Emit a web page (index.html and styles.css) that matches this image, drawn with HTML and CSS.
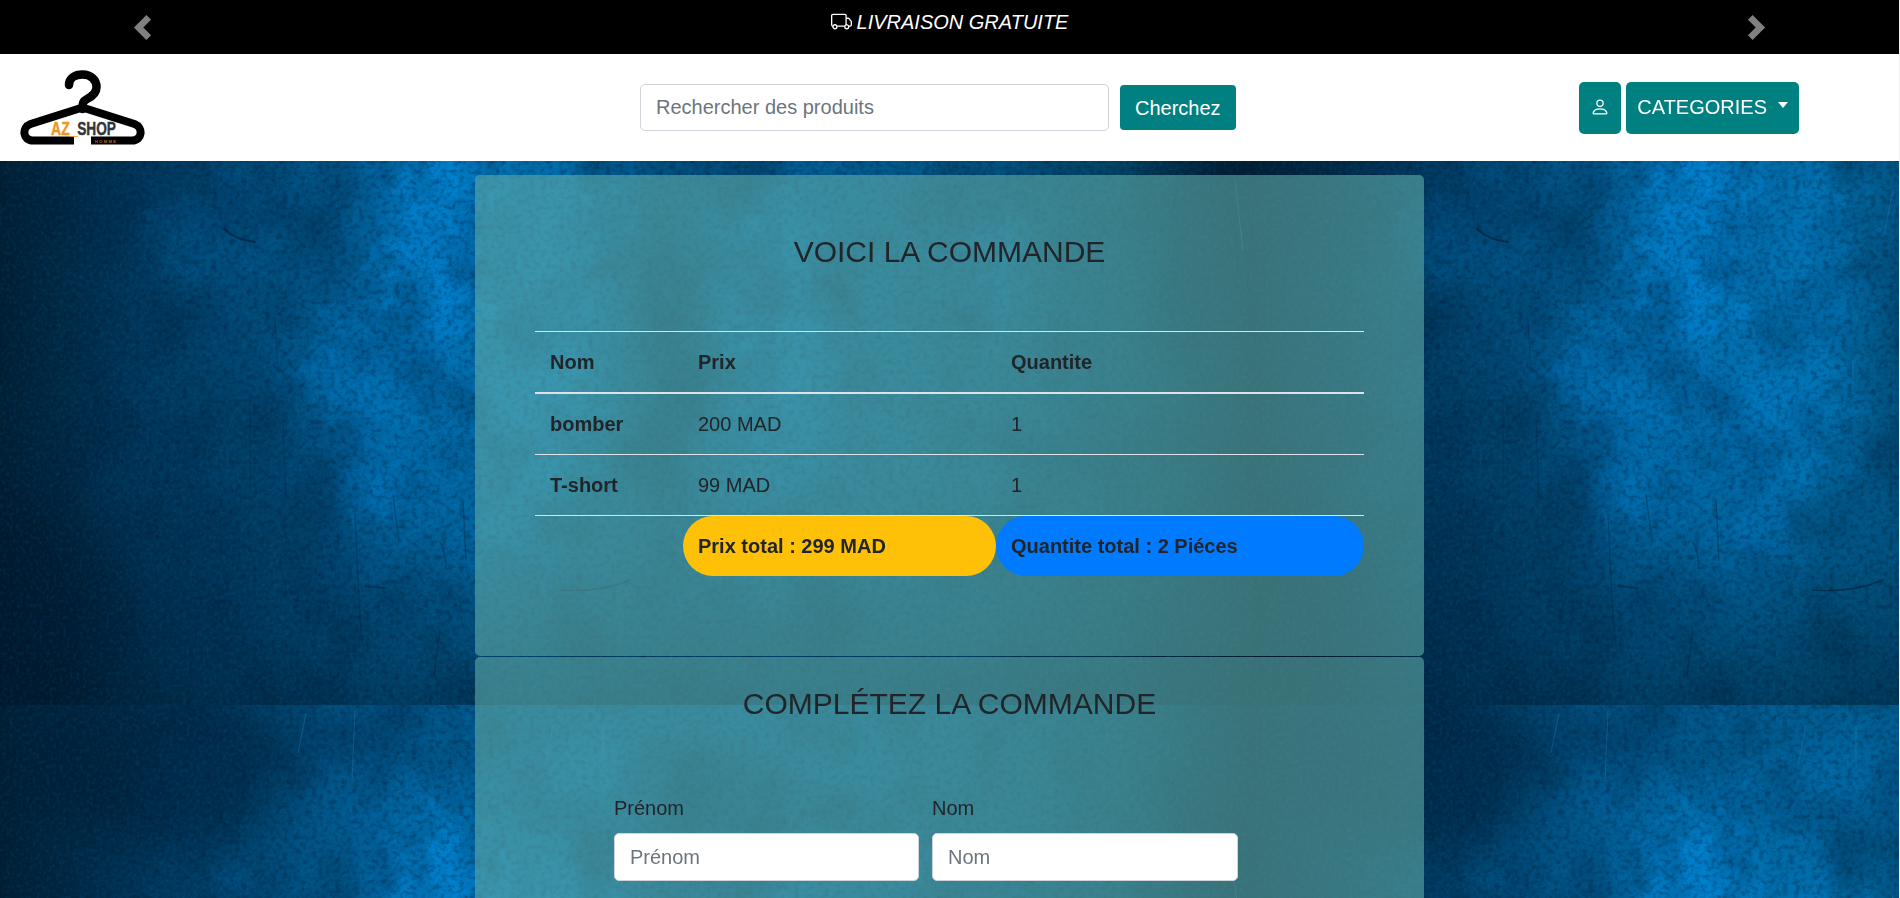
FILE: index.html
```html
<!DOCTYPE html>
<html lang="fr">
<head>
<meta charset="utf-8">
<title>AZ_SHOP</title>
<link rel="stylesheet" href="styles.css">
</head>
<body>
<svg class="backdrop" width="1899" height="898" viewBox="0 0 1899 898" color-interpolation-filters="sRGB" aria-hidden="true">
  <defs>
    <linearGradient id="base">
      <stop offset="0" stop-color="#001f33"/>
      <stop offset=".06" stop-color="#002c48"/>
      <stop offset=".14" stop-color="#004068"/>
      <stop offset=".23" stop-color="#00507f"/>
      <stop offset=".3" stop-color="#006098"/>
      <stop offset=".39" stop-color="#006ba6"/>
      <stop offset=".46" stop-color="#006296"/>
      <stop offset=".53" stop-color="#005c8e"/>
      <stop offset=".62" stop-color="#006298"/>
      <stop offset=".78" stop-color="#005582"/>
      <stop offset=".9" stop-color="#00405f"/>
      <stop offset=".96" stop-color="#002d45"/>
      <stop offset="1" stop-color="#001f33"/>
    </linearGradient>
    <linearGradient id="foot" x2="0" y2="1">
      <stop offset="0" stop-color="#001524" stop-opacity="0"/>
      <stop offset=".68" stop-color="#001524" stop-opacity="0"/>
      <stop offset="1" stop-color="#001524" stop-opacity=".5"/>
    </linearGradient>
    <filter id="soft" x="-60%" y="-60%" width="220%" height="220%"><feGaussianBlur stdDeviation="26"/></filter>
    <filter id="patch" x="-40%" y="-40%" width="180%" height="180%">
      <feGaussianBlur in="SourceGraphic" stdDeviation="20" result="b"/>
      <feTurbulence type="fractalNoise" baseFrequency=".05" numOctaves="5" seed="8" result="n"/>
      <feDisplacementMap in="b" in2="n" scale="80" xChannelSelector="R" yChannelSelector="G"/>
    </filter>
    <filter id="dark" x="0" y="0" width="100%" height="100%">
      <feTurbulence type="fractalNoise" baseFrequency=".17 .2" numOctaves="4" seed="4"/>
      <feColorMatrix values="0 0 0 0 0  0 0 0 0 .1  0 0 0 0 .2  2.2 0 0 0 -.95"/>
    </filter>
    <filter id="light" x="0" y="0" width="100%" height="100%">
      <feTurbulence type="fractalNoise" baseFrequency=".3 .25" numOctaves="3" seed="19"/>
      <feColorMatrix values="0 0 0 0 .03  0 0 0 0 .5  0 0 0 0 .82  0 1.8 0 0 -.8"/>
    </filter>
    <filter id="cloud" x="0" y="0" width="100%" height="100%">
      <feTurbulence type="fractalNoise" baseFrequency=".014 .012" numOctaves="5" seed="31"/>
      <feColorMatrix values="0 0 0 0 0  0 0 0 0 .12  0 0 0 0 .22  0 0 2.4 0 -1"/>
    </filter>
    <clipPath id="edge"><rect width="1253" height="705"/></clipPath>
    <g id="tile" clip-path="url(#edge)">
      <rect width="1253" height="705" fill="url(#base)"/>
      <g fill="#0084d2" filter="url(#patch)">
        <ellipse cx="445" cy="235" rx="50" ry="110" opacity=".85"/>
        <ellipse cx="375" cy="375" rx="70" ry="60" opacity=".5"/>
        <ellipse cx="390" cy="490" rx="42" ry="36" opacity=".65"/>
        <ellipse cx="560" cy="270" rx="38" ry="120" opacity=".5"/>
        <ellipse cx="520" cy="420" rx="70" ry="70" opacity=".5"/>
        <ellipse cx="500" cy="540" rx="40" ry="34" opacity=".65"/>
        <ellipse cx="210" cy="230" rx="60" ry="55" opacity=".16"/>
        <ellipse cx="780" cy="330" rx="42" ry="130" opacity=".4"/>
        <ellipse cx="985" cy="260" rx="26" ry="80" opacity=".45"/>
        <ellipse cx="590" cy="80" rx="75" ry="60" opacity=".25"/>
        <ellipse cx="450" cy="160" rx="50" ry="50" opacity=".5"/>
      </g>
      <g fill="#00182b" filter="url(#soft)">
        <ellipse cx="20" cy="620" rx="90" ry="130" opacity=".55"/>
        <ellipse cx="665" cy="360" rx="26" ry="190" opacity=".34"/>
        <ellipse cx="230" cy="490" rx="100" ry="120" opacity=".2"/>
        <ellipse cx="1225" cy="180" rx="30" ry="100" opacity=".4"/>
        <ellipse cx="160" cy="60" rx="130" ry="90" opacity=".5"/>
        <ellipse cx="400" cy="20" rx="200" ry="30" opacity=".25"/>
        <ellipse cx="720" cy="110" rx="90" ry="70" opacity=".3"/>
      </g>
      <rect width="1253" height="705" fill="url(#foot)"/>
      <rect width="1253" height="705" filter="url(#cloud)" opacity=".35"/>
      <rect width="1253" height="705" filter="url(#dark)" opacity=".42"/>
      <rect width="1253" height="705" filter="url(#light)" opacity=".2"/>
      <g fill="none" stroke="#001a30" stroke-linecap="round" opacity=".55">
        <path d="M224 229q12 11 31 13" stroke-width="1.8"/>
        <path d="M355 515l3 65 3 52M393 495l6 46M440 542q6 12 6 27M463 500l3 60M365 586l20 2M440 630l-6 45" stroke-width="1.3" opacity=".6"/>
        <path d="M560 590q40 3 70-10" stroke-width="1.4"/>
        <path d="M275 320l3 50M283 420l3 80M250 400v90" stroke-width="1" opacity=".5"/>
        <path d="M1222 160l8 60 16 50 5 60" stroke-width="1" opacity=".6"/>
      </g>
      <g fill="none" stroke="#2c84bd" opacity=".35">
        <path d="M306 8l-8 40M355 6l-3 70M553 20l-8 40M603 20v45M640 190l-9 45M600 360v30M1235 180l8 70"/>
      </g>
    </g>
  </defs>
  <use href="#tile"/>
  <use href="#tile" x="1253"/>
  <use href="#tile" y="705"/>
  <use href="#tile" x="1253" y="705"/>
</svg>

<div class="page">
  <div class="carousel">
    <svg class="arrow" width="25" height="25" viewBox="0 0 8 8" fill="#fff"><path d="M5.25 0l-4 4 4 4 1.5-1.5L4.25 4l2.5-2.5L5.25 0z"/></svg>
    <p class="slogan">
      <svg width="21" height="21" viewBox="0 0 16 16" fill="currentColor"><path d="M0 3.5A1.5 1.5 0 0 1 1.5 2h9A1.5 1.5 0 0 1 12 3.5V5h1.02a1.5 1.5 0 0 1 1.17.563l1.481 1.85a1.5 1.5 0 0 1 .329.938V10.5a1.5 1.5 0 0 1-1.5 1.5H14a2 2 0 1 1-4 0H5a2 2 0 1 1-3.998-.085A1.5 1.5 0 0 1 0 10.5v-7zm1.294 7.456A1.999 1.999 0 0 1 4.732 11h5.536a2.01 2.01 0 0 1 .732-.732V3.5a.5.5 0 0 0-.5-.5h-9a.5.5 0 0 0-.5.5v7a.5.5 0 0 0 .294.456zM12 10a2 2 0 0 1 1.732 1h.768a.5.5 0 0 0 .5-.5V8.35a.5.5 0 0 0-.11-.312l-1.48-1.85A.5.5 0 0 0 13.02 6H12v4zm-9 1a1 1 0 1 0 0 2 1 1 0 0 0 0-2zm9 0a1 1 0 1 0 0 2 1 1 0 0 0 0-2z"/></svg>
      <em>LIVRAISON GRATUITE</em>
    </p>
    <svg class="arrow" width="25" height="25" viewBox="0 0 8 8" fill="#fff"><path d="M2.75 0l-1.5 1.5L3.75 4l-2.5 2.5L2.75 8l4-4-4-4z"/></svg>
  </div>

  <nav class="navbar">
    <svg class="logo" width="126" height="76" viewBox="0 0 126 76">
      <path d="M49 15C49 8 55 4.500 62.500 4.500C71 4.500 76.500 10 76.500 17C76.500 23 72 26.500 67 29C63 31 62.500 33 62.500 39" fill="none" stroke="#000" stroke-width="8.500" stroke-linecap="round"/>
      <path d="M54 70.500H13C2.500 70.500 1.500 57.500 10.500 54L62.500 37.500L114.500 54C123.500 57.500 122.500 70.500 112 70.500H71" fill="none" stroke="#000" stroke-width="8" stroke-linejoin="round"/>
      <g class="logo-name" transform="translate(31 65.200) scale(.76 1)">
        <text fill="#f0961e" stroke="#f0961e" textLength="35" lengthAdjust="spacingAndGlyphs">AZ_</text>
        <text x="34.500" fill="#33343a" stroke="#33343a" textLength="51" lengthAdjust="spacingAndGlyphs">SHOP</text>
      </g>
      <text class="logo-sub" x="75" y="72.500" textLength="21">HOMME</text>
    </svg>
    <form class="search">
      <input class="field" type="text" placeholder="Rechercher des produits">
      <button class="btn" type="button">Cherchez</button>
    </form>
    <div class="actions">
      <button class="btn tall user" type="button" aria-label="Compte"><svg width="20" height="20" viewBox="0 0 16 16" fill="currentColor"><path d="M8 8a3 3 0 1 0 0-6 3 3 0 0 0 0 6zm2-3a2 2 0 1 1-4 0 2 2 0 0 1 4 0zm4 8c0 1-1 1-1 1H3s-1 0-1-1 1-4 6-4 6 3 6 4zm-1-.004c-.001-.246-.154-.986-.832-1.664C11.516 10.680 10.289 10 8 10c-2.290 0-3.516.680-4.168 1.332-.678.678-.830 1.418-.832 1.664h10z"/></svg></button>
      <button class="btn tall" type="button">CATEGORIES<span class="caret"></span></button>
    </div>
  </nav>

  <main>
    <section class="panel order">
      <h1 class="title">VOICI LA COMMANDE</h1>
      <table class="table">
        <colgroup><col class="c1"><col class="c2"><col class="c3"></colgroup>
        <thead><tr><th>Nom</th><th>Prix</th><th>Quantite</th></tr></thead>
        <tbody>
          <tr><th>bomber</th><td>200 MAD</td><td>1</td></tr>
          <tr><th>T-short</th><td>99 MAD</td><td>1</td></tr>
        </tbody>
        <tfoot><tr><th></th><th class="pill price">Prix total : 299 MAD</th><th class="pill count">Quantite total : 2 Piéces</th></tr></tfoot>
      </table>
    </section>

    <section class="panel checkout">
      <h2 class="title">COMPLÉTEZ LA COMMANDE</h2>
      <form class="form">
        <label class="group">Prénom<input class="field" type="text" placeholder="Prénom"></label>
        <label class="group">Nom<input class="field" type="text" placeholder="Nom"></label>
      </form>
    </section>
  </main>
</div>
</body>
</html>
```
FILE: styles.css
```css
* { box-sizing: border-box; }

body {
  margin: 0;
  height: 898px;
  overflow: hidden;
  background: #f1f1f1;
  color: #212529;
  font: 20px/30px "Liberation Sans", Arial, sans-serif;
}

.backdrop {
  position: absolute;
  top: 0;
  left: 0;
  z-index: -1;
}

.page { width: 1899px; height: 898px; overflow: hidden; }

.carousel {
  display: flex;
  justify-content: space-between;
  height: 54px;
  padding: 0 130px;
  background: #000;
  color: #fff;
}

.arrow { margin-top: 15px; opacity: .5; }

.slogan {
  display: flex;
  gap: 5px;
  margin: 7px 0 0;
}

.slogan svg { margin-top: 4px; }

.navbar {
  display: grid;
  grid-template-columns: 620px 596px 1fr;
  align-items: center;
  height: 107px;
  padding: 0 100px 0 20px;
  background: #fff;
}

.logo { display: block; }
.logo-name { font: bold 19px/1 "Liberation Sans", Arial, sans-serif; stroke-width: .4; }
.logo-sub { font: bold 4px "Liberation Sans", Arial, sans-serif; fill: #b8701c; }

.search { display: flex; align-items: center; gap: 11px; }

.field {
  display: block;
  width: 100%;
  height: 47.5px;
  padding: 8px 15px 7px;
  border: 1px solid #ced4da;
  border-radius: 5px;
  background: #fff;
  font: inherit;
}

.search .field { width: 469px; padding-top: 7px; }
.field::placeholder { color: #6c757d; opacity: 1; }

.btn {
  height: 45px;
  padding: 0 15px;
  border: 0;
  border-radius: 4px;
  background: teal;
  color: #fff;
  font: inherit;
}

.actions { display: flex; justify-content: flex-end; gap: 5px; }

.tall { display: flex; align-items: center; height: 52px; padding: 0 11px 1px; border-radius: 5px; }

.caret {
  margin: -4px 0 0 11px;
  border: 5.5px solid transparent;
  border-top: 6px solid #fff;
  border-bottom: 0;
}

main {
  display: flex;
  flex-direction: column;
  gap: 1px;
  width: 949px;
  margin: 14px auto 0;
}

.panel {
  border-radius: 5px;
  background: rgba(95, 172, 168, .6);
}

.order { height: 481px; padding: 59px 60px; }
.checkout { height: 400px; padding: 29px 139px; }

.title {
  margin: 0;
  font-size: 30px;
  font-weight: 400;
  line-height: 36px;
  text-align: center;
}

.table {
  width: 829px;
  margin-top: 61px;
  border-spacing: 0;
  table-layout: fixed;
  text-align: left;
}

.c1 { width: 148px; }
.c2 { width: 313px; }
.c3 { width: 368px; }

.table th, .table td { padding: 15px; }
.table thead th { border-top: 1px solid #dee2e6; border-bottom: 2px solid #dee2e6; }
.table tbody th, .table tbody td { border-bottom: 1px solid #dee2e6; }

.pill { border-radius: 30px; }
.price { background: #ffc107; }
.count { background: #007bff; }

.form {
  display: grid;
  grid-template-columns: 305px 306px;
  gap: 13px;
  margin-top: 71px;
}

.group .field { margin-top: 10px; }
```
